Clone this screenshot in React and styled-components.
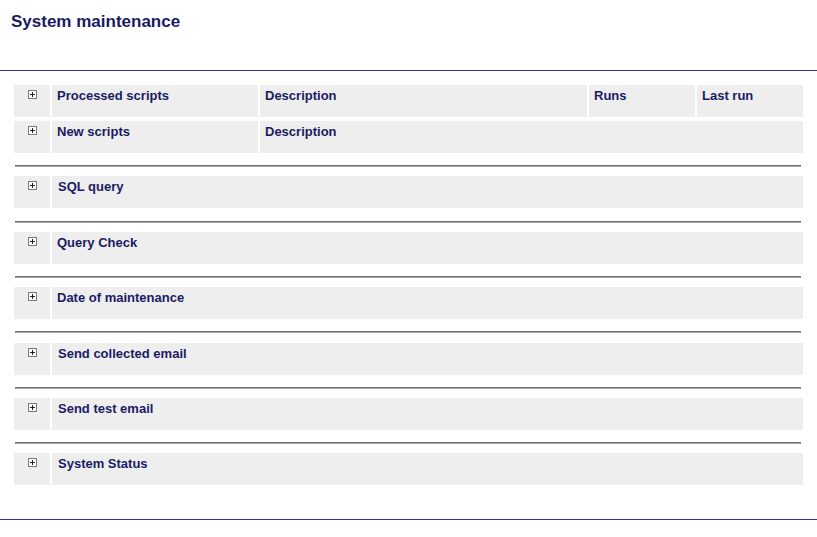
import React from 'react';
import styled, { createGlobalStyle } from 'styled-components';

const GlobalStyle = createGlobalStyle`
  body {
    margin: 0;
    background: #fff;
    font-family: "Liberation Sans", Arial, sans-serif;
  }
`;

const Page = styled.div`
  width: 817px;
`;

const Header = styled.div`
  height: 70px;
  box-sizing: border-box;
  padding: 12px 0 0 11px;
`;

const Title = styled.h1`
  margin: 0;
  font-size: 17px;
  font-weight: bold;
  color: #1b1b63;
`;

const BlueRule = styled.div`
  height: 1px;
  background: #333399;
`;

const Content = styled.div`
  padding: 14px 14px 0;
  height: 434px;
`;

const Row = styled.div`
  display: grid;
  grid-template-columns: ${p => p.$cols};
  column-gap: 2px;
  height: 32px;
  margin-bottom: ${p => p.$gap || 0}px;
`;

const Cell = styled.div`
  background: #eeeeee;
  padding: 3px ${p => p.$pad || 5}px 0;
  font-size: 13px;
  font-weight: bold;
  line-height: 15px;
  color: #1b1b63;
  white-space: nowrap;
`;

const IconCell = styled.div`
  background: #eeeeee;
  display: flex;
  justify-content: center;
  padding-top: 5px;
  padding-left: 1px;
`;

const Divider = styled.div`
  margin: 12.2px 2px 9.2px 1px;
  border-top: 1px solid #6e6e6e;
  border-bottom: 1px solid #a9a9a9;
  height: 0;
`;

const Section = styled.div`
  &:last-child ${Divider} {
    display: none;
  }
`;

const Expand = () => (
  <svg width="9" height="9" viewBox="0 0 9 9">
    <rect x="0.5" y="0.5" width="8" height="8" fill="#fff" stroke="#7a7a7a" />
    <path d="M2 4.5h5M4.5 2v5" stroke="#222" strokeWidth="1" />
  </svg>
);

const sections = [
  { label: 'SQL query', pad: 6 },
  { label: 'Query Check' },
  { label: 'Date of maintenance' },
  { label: 'Send collected email', pad: 6 },
  { label: 'Send test email', pad: 6 },
  { label: 'System Status', pad: 6 },
];

export default function App() {
  return (
    <Page>
      <GlobalStyle />
      <Header>
        <Title>System maintenance</Title>
      </Header>
      <BlueRule />
      <Content>
        <Row $cols="36px 206px 327px 106px 106px" $gap={4}>
          <IconCell><Expand /></IconCell>
          <Cell>Processed scripts</Cell>
          <Cell>Description</Cell>
          <Cell>Runs</Cell>
          <Cell>Last run</Cell>
        </Row>
        <Row $cols="36px 206px 1fr">
          <IconCell><Expand /></IconCell>
          <Cell>New scripts</Cell>
          <Cell>Description</Cell>
        </Row>
        <Divider />
        {sections.map(s => (
          <Section key={s.label}>
            <Row $cols="36px 1fr">
              <IconCell><Expand /></IconCell>
              <Cell $pad={s.pad}>{s.label}</Cell>
            </Row>
            <Divider />
          </Section>
        ))}
      </Content>
      <BlueRule />
    </Page>
  );
}
